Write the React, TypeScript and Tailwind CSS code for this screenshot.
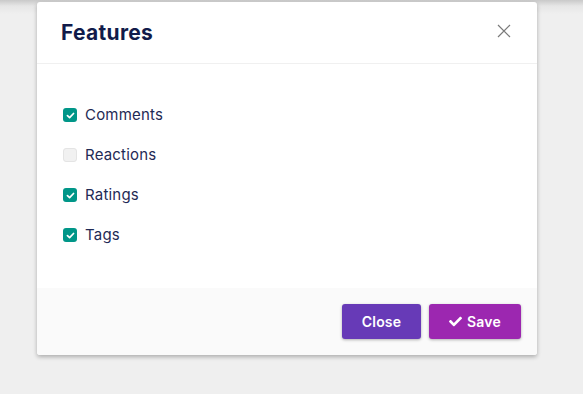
import { FaCheck } from 'react-icons/fa';

const features = [
    { label: 'Comments', checked: true },
    { label: 'Reactions', checked: false },
    { label: 'Ratings', checked: true },
    { label: 'Tags', checked: true },
];

function Checkbox({ checked }: { checked: boolean }) {
    if (!checked) {
        return <span className="w-[14px] h-[14px] rounded-[3px] bg-[#f1f1f1] border border-[#e4e4e4]" />;
    }
    return (
        <span className="w-[14px] h-[14px] rounded-[3px] bg-[#009688] flex items-center justify-center">
            <svg viewBox="0 0 10 10" className="w-[9px] h-[9px]">
                <path d="M1.6 5.2 L4 7.4 L8.4 2.8" fill="none" stroke="white" strokeWidth="1.9" strokeLinecap="round" strokeLinejoin="round" />
            </svg>
        </span>
    );
}

export default function App() {
    return (
        <div
            className="w-[583px] h-[394px] overflow-hidden bg-[linear-gradient(#c9c9c9_0px,#e6e6e6_6px,#efefef_14px)] pt-[2px]"
            style={{ fontFamily: 'Inter, "Open Sans", sans-serif' }}
        >
            <div className="ml-[37px] w-[500px] rounded-[3px] bg-white shadow-[0_2px_4px_rgba(0,0,0,0.28)]">
                {/* header */}
                <div className="h-[62px] px-[24px] flex items-center justify-between border-b border-[#f0f0f0]">
                    <h2 className="text-[21px] font-bold text-[#111b4a] tracking-[0.3px] pt-[1px]">Features</h2>
                    <svg viewBox="0 0 14 14" className="w-[14px] h-[14px] mr-[2px] mb-[3px]">
                        <path d="M1 1 L13 13 M13 1 L1 13" stroke="#7a7a7a" strokeWidth="1.2" />
                    </svg>
                </div>

                {/* body */}
                <div className="pt-[31px] pb-[33px] px-[26px]">
                    {features.map((f) => (
                        <label key={f.label} className="h-[40px] flex items-center gap-[8px]">
                            <Checkbox checked={f.checked} />
                            <span className="text-[15px] tracking-[0.2px] text-[#1f2a55]">{f.label}</span>
                        </label>
                    ))}
                </div>

                {/* footer */}
                <div className="h-[67px] bg-[#fafafa] px-[16px] flex items-center justify-end gap-[8px] rounded-b-[3px]">
                    <button className="w-[79px] h-[35px] rounded-[3px] bg-[#673ab7] text-white text-[14px] font-semibold tracking-[0.2px] shadow-[0_1px_3px_rgba(0,0,0,0.3)]">
                        Close
                    </button>
                    <button className="w-[92px] h-[35px] rounded-[3px] bg-[#9c27b0] text-white text-[14px] font-semibold tracking-[0.2px] flex items-center justify-center gap-[5px] shadow-[0_1px_3px_rgba(0,0,0,0.3)]">
                        <FaCheck className="w-[13px] h-[13px]" />
                        Save
                    </button>
                </div>
            </div>
        </div>
    );
}
